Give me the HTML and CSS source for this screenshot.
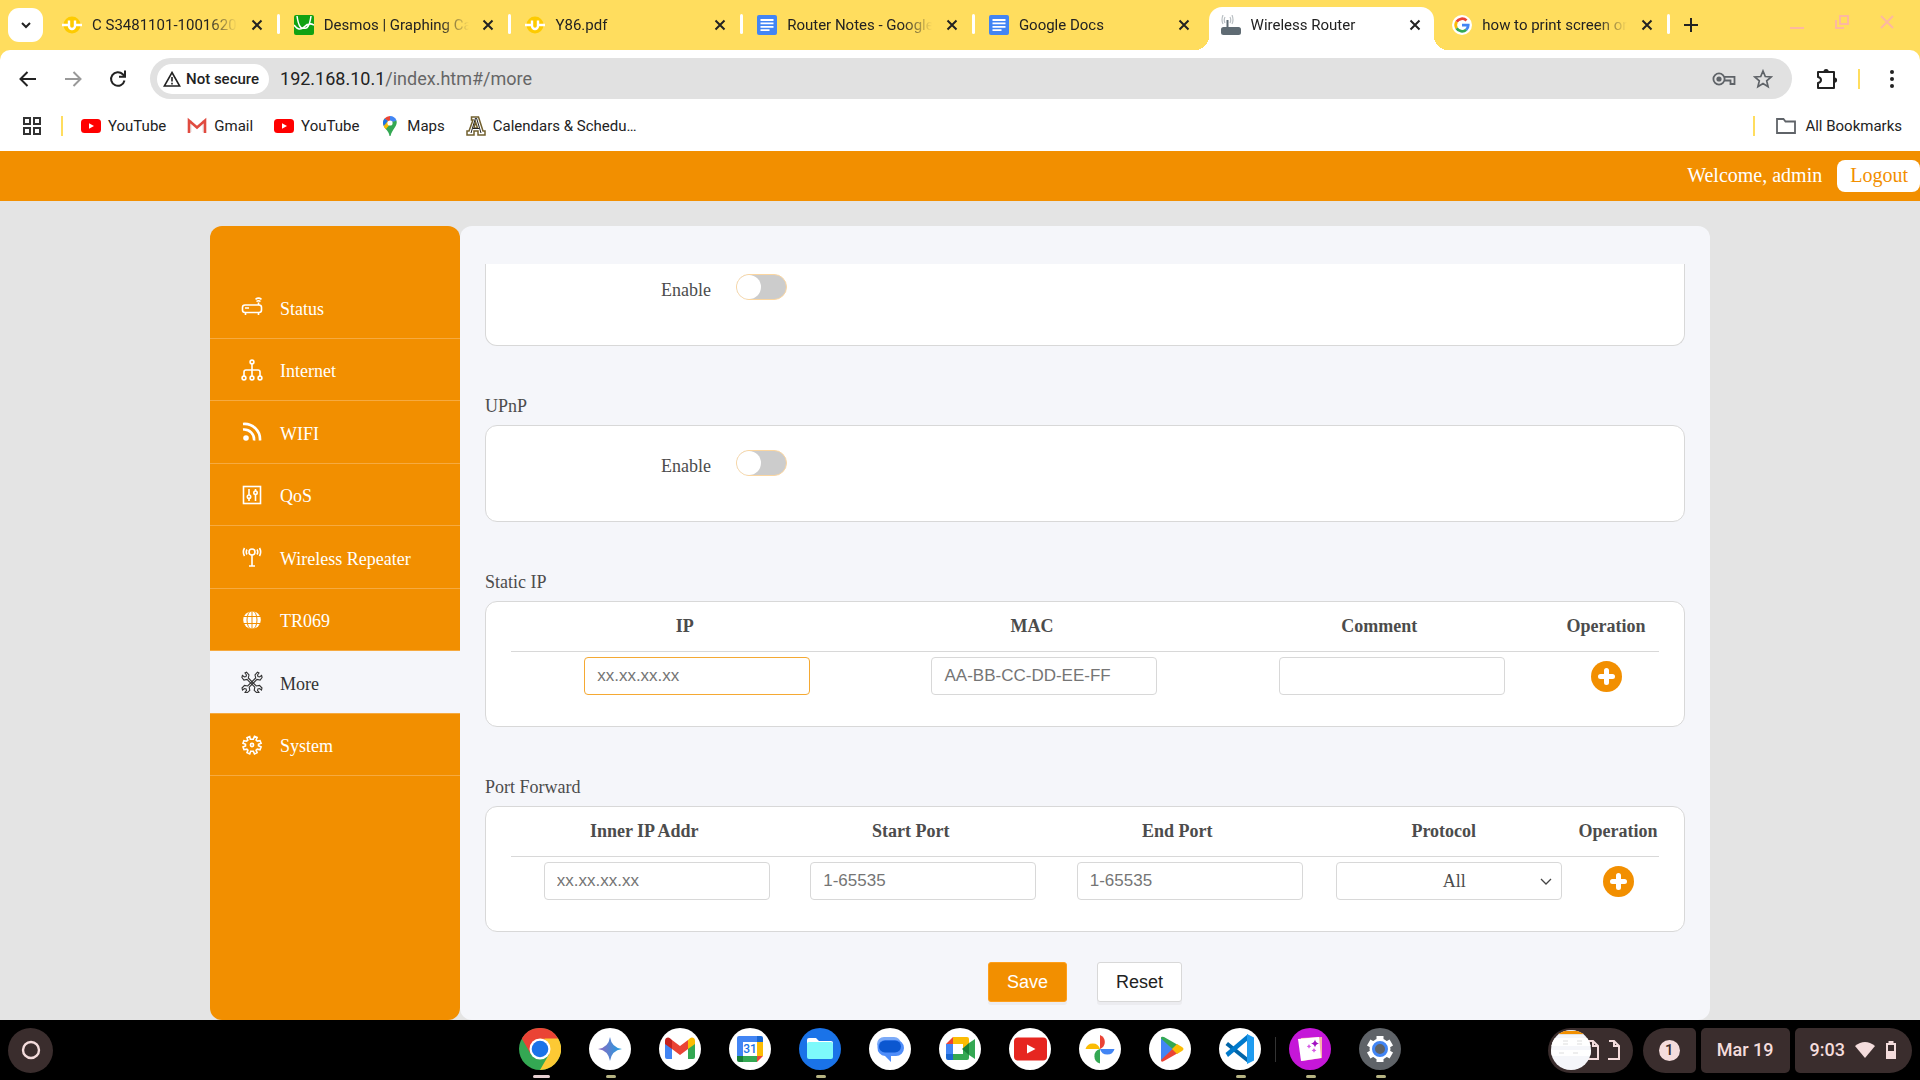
FILE: index.html
```html
<!DOCTYPE html>
<html lang="en">
<head>
<meta charset="utf-8">
<title>Wireless Router</title>
<link rel="stylesheet" href="styles.css">
</head>
<body>
<svg class="defs" aria-hidden="true">
  <symbol id="x" viewBox="0 0 16 16"><path d="M3.500 3.500l9 9M12.500 3.500l-9 9" stroke="currentColor" stroke-width="2" fill="none"/></symbol>
  <symbol id="brand-u" viewBox="0 0 20 20"><circle cx="10" cy="10" r="8.500" fill="#fecb00"/><path d="M0 10h6M14 10h6M7 5.500V11a3 3 0 0 0 6 0V5.500" stroke="#fff" stroke-width="2.400" fill="none"/></symbol>
  <symbol id="docs" viewBox="0 0 20 20"><rect width="20" height="20" rx="2" fill="#4285f4"/><path d="M3.500 5h13M3.500 8.400h13M3.500 11.800h13M3.500 15.200h9" stroke="#fff" stroke-width="1.800"/></symbol>
  <symbol id="youtube" viewBox="0 0 20 20"><rect y="3" width="20" height="14" rx="3.500" fill="#f00"/><path d="M8 7.200v5.600l5-2.800z" fill="#fff"/></symbol>
  <symbol id="plus" viewBox="0 0 31 31"><circle cx="15.500" cy="15.500" r="15.500" fill="#f28f00"/><path d="M15.500 9.500v12M9.500 15.500h12" stroke="#fff" stroke-width="5" stroke-linecap="round"/></symbol>
</svg>

<header class="browser">
  <div class="tabstrip">
    <button class="tab-search" aria-label="Search tabs"><svg width="14" height="14" viewBox="0 0 14 14"><path d="M3 5l4 4 4-4" stroke="#222" stroke-width="2" fill="none"/></svg></button>
    <nav class="tabs" aria-label="Tabs">
      <div class="tab"><svg class="fav"><use href="#brand-u"/></svg><span class="tab-title">C S3481101-1001620 Computer</span><button class="close" aria-label="Close"><svg><use href="#x"/></svg></button></div>
      <div class="tab"><svg class="fav" viewBox="0 0 20 20"><rect width="20" height="20" rx="2" fill="#11a113"/><path d="M0 10q5 7 10 2t10-2M3 1q2 14 7 12 5 2 7-12" stroke="#fff" stroke-width="1.500" fill="none"/></svg><span class="tab-title">Desmos | Graphing Calculator</span><button class="close" aria-label="Close"><svg><use href="#x"/></svg></button></div>
      <div class="tab"><svg class="fav"><use href="#brand-u"/></svg><span class="tab-title">Y86.pdf</span><button class="close" aria-label="Close"><svg><use href="#x"/></svg></button></div>
      <div class="tab"><svg class="fav"><use href="#docs"/></svg><span class="tab-title">Router Notes - Google Docs</span><button class="close" aria-label="Close"><svg><use href="#x"/></svg></button></div>
      <div class="tab tab-bare"><svg class="fav"><use href="#docs"/></svg><span class="tab-title">Google Docs</span><button class="close" aria-label="Close"><svg><use href="#x"/></svg></button></div>
      <div class="tab tab-active"><svg class="fav" viewBox="0 0 20 20"><rect y="12" width="20" height="8" rx="2.500" fill="#5f6b73"/><path d="M6.500 13V5" stroke="#5f6b73" stroke-width="2"/><path d="M4 2q-1.500 3 0 6M9 2q1.500 3 0 6M2 0q-2 5 0 9M11 0q2 5 0 9" stroke="#b9bfc3" stroke-width="1.200" fill="none"/></svg><span class="tab-title">Wireless Router</span><button class="close" aria-label="Close"><svg><use href="#x"/></svg></button></div>
      <div class="tab"><svg class="fav" viewBox="0 0 20 20"><circle cx="10" cy="10" r="10" fill="#fff"/><g fill="none" stroke-width="2.800"><path d="M14.500 5.600A6.300 6.300 0 0 0 4.600 6.800" stroke="#ea4335"/><path d="M4.600 6.800a6.300 6.300 0 0 0 0 6.400" stroke="#fbbc04"/><path d="M4.600 13.200a6.300 6.300 0 0 0 9.600 1.500" stroke="#34a853"/><path d="M14.200 14.700A6 6 0 0 0 16.200 10.200H10" stroke="#4285f4"/></g></svg><span class="tab-title">how to print screen on chromebook</span><button class="close" aria-label="Close"><svg><use href="#x"/></svg></button></div>
    </nav>
    <div class="window-tools">
      <button class="new-tab" aria-label="New tab"><svg width="14" height="14" viewBox="0 0 14 14"><path d="M7 0v14M0 7h14" stroke="#222" stroke-width="2"/></svg></button>
      <button class="win" aria-label="Minimize"><svg width="16" height="16" viewBox="0 0 16 16"><path d="M1 14h14" stroke="#fdb8a0" stroke-width="2"/></svg></button>
      <button class="win" aria-label="Restore"><svg width="16" height="16" viewBox="0 0 16 16"><path d="M6 2h8v8H6zM2 6v8h8" stroke="#fdb8a0" stroke-width="2" fill="none"/></svg></button>
      <button class="win" aria-label="Close window"><svg width="16" height="16" viewBox="0 0 16 16"><path d="M2 2l12 12M14 2L2 14" stroke="#fdb8a0" stroke-width="2"/></svg></button>
    </div>
  </div>

  <div class="chrome">
    <div class="toolbar">
      <button class="nav-btn" aria-label="Back"><svg width="18" height="16" viewBox="0 0 18 16"><path d="M17 8H2M8.500 1L1.500 8l7 7" stroke="#222" stroke-width="2" fill="none"/></svg></button>
      <button class="nav-btn" aria-label="Forward"><svg width="18" height="16" viewBox="0 0 18 16"><path d="M1 8h15M9.500 1l7 7-7 7" stroke="#999" stroke-width="2" fill="none"/></svg></button>
      <button class="nav-btn" aria-label="Reload"><svg width="18" height="18" viewBox="0 0 18 18"><path d="M15.500 10.500A6.800 6.800 0 1 1 13.800 4.300L16 6.500M16 .500v6.300H10" stroke="#222" stroke-width="2" fill="none"/></svg></button>
      <div class="omnibox">
        <button class="chip"><svg width="18" height="16" viewBox="0 0 18 16"><path d="M9 1.500L16.700 15H1.300zM9 6v4.500M9 11.800v1.700" stroke="#222" stroke-width="1.600" fill="none"/></svg>Not secure</button>
        <span class="url">192.168.10.1<span class="path">/index.htm#/more</span></span>
        <svg width="24" height="16" viewBox="0 0 24 16"><circle cx="7" cy="8" r="5.600" stroke="#5f6368" stroke-width="1.800" fill="none"/><circle cx="7" cy="8" r="2.600" fill="#5f6368"/><path d="M12 5.800h10.500V13h-4V9.500h-6" stroke="#5f6368" stroke-width="1.800" fill="none"/></svg>
        <svg width="20" height="20" viewBox="0 0 20 20"><path d="M10 2l2.300 5.500 5.900.500-4.500 3.900 1.400 5.800L10 14.600l-5.100 3.100 1.400-5.800L1.800 8l5.900-.500z" stroke="#5f6368" stroke-width="1.700" fill="none"/></svg>
      </div>
      <div class="tool-right">
        <svg width="22" height="22" viewBox="0 0 22 22"><path d="M2 4h16v16H2v-5q3-.700 3-3t-3-3z" stroke="#222" stroke-width="2" fill="none" stroke-linejoin="round"/><path d="M7.500 3.500a2.600 2.600 0 0 1 5.200 0zM18.500 9.500a2.600 2.600 0 0 1 0 5.200z" fill="#222"/></svg>
        <span class="bar"></span>
        <svg width="6" height="20" viewBox="0 0 6 20"><g fill="#222"><circle cx="3" cy="3" r="2"/><circle cx="3" cy="10" r="2"/><circle cx="3" cy="17" r="2"/></g></svg>
      </div>
    </div>
    <nav class="bookmarks" aria-label="Bookmarks">
      <svg width="18" height="18" viewBox="0 0 18 18"><path d="M1 1h6v6H1zM11 1h6v6h-6zM1 11h6v6H1zM11 11h6v6h-6z" stroke="#333" stroke-width="2" fill="none"/></svg>
      <span class="bar bar-start"></span>
      <a href="#"><svg class="fav"><use href="#youtube"/></svg>YouTube</a>
      <a href="#"><svg class="fav" viewBox="0 0 20 20"><path d="M1 4h4v12H1zM15 4h4v12h-4z" fill="#f0f0f0"/><path d="M2 17V4.500l8 7 8-7V17" stroke="#e04b40" stroke-width="2.600" fill="none"/></svg>Gmail</a>
      <a href="#"><svg class="fav"><use href="#youtube"/></svg>YouTube</a>
      <a href="#"><svg class="fav" viewBox="0 0 20 20"><path d="M10 0a7 7 0 0 0-5.400 2.600L10 7z" fill="#ea4335"/><path d="M4.600 2.600A7 7 0 0 0 3.700 10L10 7z" fill="#fbbc04"/><path d="M10 0a7 7 0 0 1 6.500 4.500L10 9z" fill="#4285f4"/><path d="M16.500 4.500C18 10 12 13 10.500 20h-1C9 15 5 13 3.700 10L10 7z" fill="#34a853"/><path d="M4.600 2.600A7 7 0 0 0 3.700 10L8 5z" fill="#1a73e8"/><path d="M3.700 10q.8 2 2 3.300L13 5z" fill="#fbbc04"/><circle cx="10" cy="7" r="2.600" fill="#fff"/></svg>Maps</a>
      <a href="#"><svg class="fav" viewBox="0 0 20 20"><path d="M5.500 1h7l4.500 14h2v4h-7v-4H8v4H1v-4h2L7 4H5.500zM9.500 6l-1.500 6h3.500z" fill="#fff" stroke="#72602e" stroke-width="1.500"/><path d="M9.500 2L5 17M10.500 2L15 17M7 12.500h6" stroke="#222" stroke-width="1" fill="none"/></svg>Calendars &amp; Schedu…</a>
      <span class="bar bar-end"></span>
      <a href="#" class="all"><svg class="fav" viewBox="0 0 20 20"><path d="M1 3h6.500l2 2.500H19V17H1z" stroke="#5f6368" stroke-width="1.800" fill="none"/></svg>All Bookmarks</a>
    </nav>
  </div>
</header>

<div class="topbar">
  <span>Welcome, admin</span>
  <button class="logout">Logout</button>
</div>

<div class="router">
  <nav class="sidebar" aria-label="Router menu">
    <a href="#"><svg width="22" height="22" viewBox="0 0 22 22"><rect x="1.500" y="9" width="19" height="7.500" rx="2.500"/><path d="M4.500 17v2M17.500 17v2M4 12h4M17.500 9V6.500M15.500 5.500q2-1.600 4 0M14.500 3.300q3-2.400 6 0"/></svg>Status</a>
    <a href="#"><svg width="22" height="22" viewBox="0 0 22 22"><circle cx="11" cy="3" r="1.900"/><circle cx="3" cy="19" r="1.900"/><circle cx="11" cy="19" r="1.900"/><circle cx="19" cy="19" r="1.900"/><path d="M11 5v12M3 17v-4q0-2 2-2h12q2 0 2 2v4"/></svg>Internet</a>
    <a href="#"><svg width="22" height="22" viewBox="0 0 22 22"><circle cx="5" cy="17" r="2.800" fill="currentColor" stroke="none"/><path d="M2 8.500A10 10 0 0 1 13 19.500M2 3A15.500 15.500 0 0 1 19 19.500" stroke-width="2.600"/></svg>WIFI</a>
    <a href="#"><svg width="22" height="22" viewBox="0 0 22 22"><rect x="2.500" y="2.500" width="17" height="17"/><path d="M8 5v6M8 14.500V17M14.500 5v2M14.500 10.500V17"/><circle cx="8" cy="12.700" r="1.700"/><circle cx="14.500" cy="8.700" r="1.700"/></svg>QoS</a>
    <a href="#"><svg width="22" height="22" viewBox="0 0 22 22"><circle cx="11" cy="6" r="3"/><path d="M11 9v11M8 20h6M6 3.500q-1.500 2.500 0 5M16 3.500q1.500 2.500 0 5M3.500 2q-2.300 4 0 8M18.500 2q2.300 4 0 8"/></svg>Wireless Repeater</a>
    <a href="#"><svg width="22" height="22" viewBox="0 0 22 22"><circle cx="11" cy="11" r="8.800" fill="currentColor" stroke="none"/><g stroke="#f28f00" stroke-width="1"><path d="M2 7.500h18M2 14.500h18M11 2v18"/><ellipse cx="11" cy="11" rx="5" ry="9.500"/></g></svg>TR069</a>
    <a href="#" class="current" aria-current="page"><svg width="22" height="22" viewBox="0 0 22 22"><g id="wrench" stroke-width="1.100"><path d="M5.500 1.200L8 3.800l-.7 3.200 8 8 3.200-.6 2.500 2.600-.5 2-2-1.500-1.600.4-.4 1.600 1.500 1.900-2 .5-2.800-2.500.6-3.200-7.800-7.800-3.100.7L.9 6.500l.5-2L3.500 6 5 5.500 5.500 4 4 2z"/></g><use href="#wrench" transform="matrix(-1 0 0 1 22 0)"/></svg>More</a>
    <a href="#"><svg width="22" height="22" viewBox="0 0 22 22"><path d="M9.300 5.200L8.700 2.500 6 3.600l.8 2.600-1.200 1-2.700-.6L2 9.300l2.500 1v1.600L2 13l1 2.700 2.800-.5 1.100 1.100L6 18.700l2.700 1.200 1-2.600h2.600l1.200 2.600 2.600-1.200-1-2.500 1.200-1.100 2.700.6 1.100-2.700-2.600-1.200v-1.500l2.600-1-1.100-2.700-2.700.5-1.200-1.100 1-2.500-2.600-1.100-1.200 2.700z"/><circle cx="11" cy="11" r="1.600"/></svg>System</a>
  </nav>

  <main class="panel">
    <div class="card card-cut">
      <label class="field"><span>Enable</span><input type="checkbox" class="switch"></label>
    </div>

    <h2>UPnP</h2>
    <div class="card">
      <label class="field"><span>Enable</span><input type="checkbox" class="switch"></label>
    </div>

    <h2>Static IP</h2>
    <div class="card card-table">
      <table>
        <colgroup><col><col><col><col class="op-wide"></colgroup>
        <thead><tr><th>IP</th><th>MAC</th><th>Comment</th><th>Operation</th></tr></thead>
        <tbody><tr>
          <td><input type="text" class="box focused" aria-label="IP" placeholder="xx.xx.xx.xx"></td>
          <td><input type="text" class="box" aria-label="MAC" placeholder="AA-BB-CC-DD-EE-FF"></td>
          <td><input type="text" class="box" aria-label="Comment"></td>
          <td><button class="add" aria-label="Add static IP"><svg width="31" height="31"><use href="#plus"/></svg></button></td>
        </tr></tbody>
      </table>
    </div>

    <h2>Port Forward</h2>
    <div class="card card-table">
      <table>
        <colgroup><col><col><col><col><col class="op"></colgroup>
        <thead><tr><th>Inner IP Addr</th><th>Start Port</th><th>End Port</th><th>Protocol</th><th>Operation</th></tr></thead>
        <tbody><tr>
          <td><input type="text" class="box" aria-label="Inner IP Addr" placeholder="xx.xx.xx.xx"></td>
          <td><input type="text" class="box" aria-label="Start Port" placeholder="1-65535"></td>
          <td><input type="text" class="box" aria-label="End Port" placeholder="1-65535"></td>
          <td class="cell-select"><span class="select"><select class="box" aria-label="Protocol"><option>All</option><option>TCP</option><option>UDP</option></select><svg width="12" height="8" viewBox="0 0 12 8"><path d="M1 1l5 5 5-5" stroke="#444" stroke-width="1.300" fill="none"/></svg></span></td>
          <td><button class="add" aria-label="Add port forward"><svg width="31" height="31"><use href="#plus"/></svg></button></td>
        </tr></tbody>
      </table>
    </div>

    <div class="actions">
      <button class="btn btn-main">Save</button>
      <button class="btn">Reset</button>
    </div>
  </main>
</div>

<footer class="shelf">
  <button class="launcher" aria-label="Launcher"><svg width="20" height="20" viewBox="0 0 20 20"><circle cx="10" cy="10" r="8" stroke="#f4dcdc" stroke-width="2.400" fill="none"/></svg></button>
  <div class="apps">
    <button class="app open-wide" aria-label="Chrome"><svg viewBox="0 0 42 42"><circle cx="21" cy="21" r="21" fill="#34a853"/><path d="M21 21L2.800 10.500A21 21 0 0 1 39.200 10.500z" fill="#ea4335"/><path d="M21 10.500h18.200A21 21 0 0 1 21 42l9.100-15.800z" fill="#fcc934"/><path d="M2.800 10.500L11.900 26.200 21 21l5-10.500z" fill="#ea4335"/><circle cx="21" cy="21" r="10.500" fill="#fff"/><circle cx="21" cy="21" r="8.300" fill="#1a73e8"/></svg></button>
    <button class="app open" aria-label="Gemini"><svg viewBox="0 0 42 42"><defs><linearGradient id="gem"><stop offset="0" stop-color="#9168c0"/><stop offset=".5" stop-color="#5684d1"/><stop offset="1" stop-color="#1ba1e3"/></linearGradient></defs><circle cx="21" cy="21" r="21" fill="#fff"/><path d="M21 9q1.500 10.500 12 12-10.500 1.500-12 12-1.500-10.500-12-12 10.500-1.500 12-12z" fill="url(#gem)"/></svg></button>
    <button class="app" aria-label="Gmail"><svg viewBox="0 0 42 42"><circle cx="21" cy="21" r="21" fill="#fff"/><path d="M6 15l7 5v11H8a2 2 0 0 1-2-2z" fill="#4285f4"/><path d="M36 15l-7 5v11h5a2 2 0 0 0 2-2z" fill="#34a853"/><path d="M29 12l2-1.700c2-1.600 5-.3 5 2.500V16l-7 5z" fill="#fbbc04"/><path d="M13 12l8 6 8-6v9l-8 6-8-6z" fill="#ea4335"/><path d="M13 12l-2-1.700c-2-1.600-5-.3-5 2.500V16l7 5z" fill="#c5221f"/></svg></button>
    <button class="app" aria-label="Calendar"><svg viewBox="0 0 42 42"><circle cx="21" cy="21" r="21" fill="#fff"/><path d="M8 10q0-2 2-2h18v6H14v14H8z" fill="#4285f4"/><path d="M28 8h4q2 0 2 2v4h-6z" fill="#1967d2"/><path d="M28 14h6v14h-6z" fill="#fbbc04"/><path d="M14 28h14v6H14z" fill="#34a853"/><path d="M8 28h6v6h-4q-2 0-2-2z" fill="#188038"/><path d="M28 28h6l-6 6z" fill="#ea4335"/><text x="21" y="25" class="cal">31</text></svg></button>
    <button class="app open" aria-label="Files"><svg viewBox="0 0 42 42"><circle cx="21" cy="21" r="21" fill="#1a73e8"/><path d="M8 12q0-2 2-2h7l3 3h12q2 0 2 2v4H8z" fill="#fff"/><rect x="8" y="14" width="26" height="17" rx="2" fill="#7df9fb"/></svg></button>
    <button class="app" aria-label="Messages"><svg viewBox="0 0 42 42"><circle cx="21" cy="21" r="21" fill="#fff"/><rect x="8" y="9" width="24" height="14" rx="7" fill="#7baaf7"/><path d="M17 12h10a8 8 0 0 1 0 16h-5v6l-6-6a8 8 0 0 1 1-16z" fill="#4f8df9"/><rect x="10" y="12.500" width="22" height="12" rx="6" fill="#0b57d0"/></svg></button>
    <button class="app" aria-label="Meet"><svg viewBox="0 0 42 42"><circle cx="21" cy="21" r="21" fill="#fff"/><path d="M14 9h14q2 0 2 2v8l-6 3v-6H14z" fill="#fbbc04"/><path d="M7 16l7-7v7z" fill="#ea4335"/><path d="M7 16h7v11H7z" fill="#4285f4"/><path d="M7 26h7v6H9q-2 0-2-2z" fill="#1967d2"/><path d="M14 26h10v-5h6v9q0 2-2 2H14z" fill="#34a853"/><path d="M23 21l7-6v12z" fill="#188038"/><path d="M30 15l6-4v20l-6-4z" fill="#34a853"/></svg></button>
    <button class="app" aria-label="YouTube"><svg viewBox="0 0 42 42"><circle cx="21" cy="21" r="21" fill="#fff"/><rect x="5" y="9.500" width="33" height="23" rx="4" fill="#e62620"/><path d="M18 16.500v9l8.500-4.500z" fill="#fff"/></svg></button>
    <button class="app" aria-label="Photos"><svg viewBox="0 0 42 42"><circle cx="21" cy="21" r="21" fill="#fff"/><path d="M21 7a7.500 7.500 0 0 1 0 14z" fill="#ea4335"/><path d="M21 21h14.500a7.500 7.500 0 0 1-14.500 0z" fill="#4285f4"/><path d="M21 21v14.500a7.500 7.500 0 0 1 0-14.500z" fill="#34a853"/><path d="M21 21H6.500a7.500 7.500 0 0 1 14.500 0z" fill="#fbbc04"/></svg></button>
    <button class="app" aria-label="Play Store"><svg viewBox="0 0 42 42"><circle cx="21" cy="21" r="21" fill="#fff"/><path d="M12 9v24l12-12z" fill="#4285f4"/><path d="M12 10q0-2 3-1l14 8-5 4.500-12-11z" fill="#34a853"/><path d="M12 32q0 3 3 1l14-8-5-4.500z" fill="#ea4335"/><path d="M28 16l5 3q3 2 0 4l-5 3-5-5z" fill="#fbbc04"/></svg></button>
    <button class="app open" aria-label="VS Code"><svg viewBox="0 0 42 42"><circle cx="21" cy="21" r="21" fill="#fff"/><path d="M9 14l20 16v5L6.500 17z" fill="#0065a9"/><path d="M9 29L29 12V6L6.500 25z" fill="#007acc"/><path d="M28 6l7 3.500v23L28 36z" fill="#1f9cf0"/></svg></button>
    <button class="app open after-rule" aria-label="Gallery"><svg viewBox="0 0 42 42"><circle cx="21" cy="21" r="21" fill="#c517d8"/><path d="M12 10l21-1v21l-20 3z" fill="#f6b3a8"/><path d="M9 11l21-2 2 21-20 3z" fill="#fff"/><path d="M26 11.500q.7 3.300 4 4-3.300.7-4 4-.7-3.300-4-4 3.300-.7 4-4z" fill="#a112c2"/><path d="M20 16q.4 2 2.200 2.400-1.800.4-2.200 2.400-.4-2-2.200-2.400 1.800-.4 2.200-2.400zM25 20q.4 2 2.400 2.400-2 .4-2.400 2.400-.4-2-2.400-2.400 2-.4 2.400-2.400z" fill="#d558e4"/></svg></button>
    <button class="app open" aria-label="Settings"><svg viewBox="0 0 42 42"><circle cx="21" cy="21" r="21" fill="#5f6368"/><g stroke="#fff" stroke-width="7"><path d="M21 8v26M9.700 14.500l22.600 13M9.700 27.500l22.600-13"/></g><circle cx="21" cy="21" r="10.500" fill="#fff"/><circle cx="21" cy="21" r="6.500" fill="#5f6368" stroke="#4285f4" stroke-width="3"/></svg></button>
  </div>
  <div class="tray">
    <button class="tote" aria-label="Recent files"><svg width="40" height="40" viewBox="0 0 40 40"><defs><clipPath id="round"><circle cx="20" cy="20" r="20"/></clipPath></defs><g clip-path="url(#round)"><path fill="#f5f6fa" d="M0 0h40v40H0z"/><path fill="#e4e4e4" d="M0 0h40v1H0zM0 4h40v1H0z"/><path fill="#f28f00" d="M0 1h40v3H0z"/><path fill="#fff" d="M0 8h40v8H0zM0 20h40v6H0z"/><path stroke="#ddd" stroke-dasharray="5 9" d="M12 11h24M12 14h24M8 23h24"/></g></svg><svg class="doc" width="18" height="22" viewBox="0 0 18 22"><path d="M4 2h6l5 5v13H4M10 2v5h5" stroke="#f4dcdc" stroke-width="2" fill="none"/></svg><svg class="doc" width="18" height="22" viewBox="0 0 18 22"><path d="M5 2h5l5 5v13H4M10 2v5h5" stroke="#f4dcdc" stroke-width="2" fill="none"/></svg></button>
    <button class="pill pill-left" aria-label="Notifications"><span class="count">1</span></button>
    <button class="pill">Mar 19</button>
    <button class="pill pill-right">9:03<svg width="20" height="16" viewBox="0 0 20 16"><path d="M0 4q10-8 20 0L10 16z" fill="#f4dcdc"/></svg><svg width="12" height="18" viewBox="0 0 12 18"><path d="M3.500 0h5v2H11v16H1V2h2.500zM3 4v6h6V4z" fill="#f4dcdc" fill-rule="evenodd"/></svg></button>
  </div>
</footer>
</body>
</html>
```
FILE: styles.css
```css
* { box-sizing: border-box; }

:root {
  --orange: #f28f00;
  --ink: #4c4c4c;
  --panel: #f5f6fa;
  --line: #d8d8d8;
  --tray: #3a2d2d;
  --tray-ink: #f4dcdc;
}

body {
  margin: 0;
  min-height: 100vh;
  display: flex;
  flex-direction: column;
  background: #e4e4e4;
  color: var(--ink);
  font: 18px/22px "Liberation Serif", serif;
}

button {
  padding: 0;
  border: 0;
  background: none;
  color: inherit;
  font: inherit;
}

a { color: inherit; text-decoration: none; }
svg { display: block; flex: none; }
.defs { position: absolute; width: 0; height: 0; }
.fav { width: 20px; height: 20px; }

/* Browser frame */
.browser {
  background: #ffdd5e;
  color: #222;
  font: 15px/20px Roboto, sans-serif;
}

.tabstrip { display: flex; height: 50px; }

.tab-search {
  display: grid;
  place-items: center;
  width: 35px;
  height: 34px;
  margin: 8px 4px 0 8px;
  border-radius: 11px;
  background: #fff;
}

.tabs { display: flex; flex: 1; min-width: 0; }

.tab {
  position: relative;
  z-index: 0;
  display: flex;
  flex: 1;
  align-items: center;
  gap: 10px;
  min-width: 0;
  padding: 0 14px 0 15px;
}

.tab::after {
  content: "";
  position: absolute;
  top: 14px;
  right: -1px;
  width: 3px;
  height: 20px;
  border-radius: 2px;
  background: #fff;
}

.tab-bare::after { display: none; }

.tab-title {
  flex: 1;
  overflow: hidden;
  white-space: nowrap;
  mask-image: linear-gradient(to right, #000 115px, transparent 145px);
}

.close svg { width: 16px; height: 16px; }

.tab-active::before {
  content: "";
  position: absolute;
  z-index: -1;
  inset: 7px 3px 0;
  border-radius: 13px 13px 0 0;
  background: #fff;
}

.tab-active::after {
  z-index: -1;
  top: auto;
  bottom: 0;
  left: -11px;
  right: -11px;
  width: auto;
  height: 14px;
  border-radius: 0;
  background:
    radial-gradient(circle at 0 0, transparent 14px, #fff 14px) left / 14px 14px no-repeat,
    radial-gradient(circle at 100% 0, transparent 14px, #fff 14px) right / 14px 14px no-repeat;
}

.window-tools {
  display: flex;
  align-items: center;
  width: 251px;
  padding: 0 25px 0 15px;
}

.new-tab { margin-right: auto; }
.win { margin: 0 0 6px 29px; }

.chrome {
  border-radius: 10px 10px 0 0;
  background: #fff;
}

.toolbar {
  display: flex;
  align-items: center;
  padding: 8px 0 0 5px;
}

.nav-btn {
  display: grid;
  place-items: center;
  width: 45px;
  height: 40px;
}

.omnibox {
  display: flex;
  flex: 1;
  align-items: center;
  gap: 17px;
  height: 41px;
  margin-left: 10px;
  padding: 0 19px 0 7px;
  border-radius: 21px;
  background: #e1e1e1;
}

.chip {
  display: flex;
  align-items: center;
  gap: 5px;
  height: 30px;
  margin-right: -6px;
  padding: 0 10px 0 6px;
  border-radius: 15px;
  background: #fff;
  font-weight: 500;
}

.url { flex: 1; font-size: 18px; }
.path { color: #666; }

.tool-right {
  display: flex;
  align-items: center;
  justify-content: space-between;
  gap: 20px;
  width: 128px;
  padding: 0 25px 0 24px;
}

.bar {
  width: 2px;
  height: 20px;
  background: #ffdd5e;
}

.tool-right .bar { margin-right: auto; }

.bookmarks {
  display: flex;
  align-items: center;
  gap: 21px;
  height: 52px;
  padding: 2px 18px 0 23px;
}

.bookmarks a { display: flex; gap: 7px; }
.bookmarks .bar-start { margin: 0 -3px 0 -1px; }
.bookmarks .bar-end { margin-left: auto; }
.bookmarks .all { gap: 9px; }

/* Router page */
.topbar {
  display: flex;
  align-items: center;
  justify-content: flex-end;
  gap: 15px;
  height: 50px;
  background: var(--orange);
  color: #fff;
  font-size: 20px;
}

.logout {
  height: 32px;
  padding: 0 12px 2px 13px;
  border-radius: 8px;
  background: #fff;
  color: var(--orange);
}

.topbar span { padding-bottom: 2px; }

.router {
  display: flex;
  flex: 1;
  width: 100%;
  max-width: 1500px;
  margin: 25px auto 0;
}

.sidebar {
  display: grid;
  grid-template-rows: repeat(8, 1fr);
  align-content: start;
  width: 250px;
  padding: 50px 0 244px;
  border-radius: 12px;
  background: var(--orange);
  color: #fff;
}

.sidebar a {
  display: flex;
  align-items: center;
  gap: 17px;
  padding: 4px 31px 0;
  border-bottom: 1px solid #f6aa40;
}

.sidebar svg {
  margin-bottom: 3px;
  fill: none;
  stroke: currentColor;
  stroke-width: 1.6;
}

.sidebar .current { background: var(--panel); color: #333; }

.panel {
  flex: 1;
  min-width: 0;
  padding: 38px 25px 16px;
  border-radius: 12px;
  background: var(--panel);
}

h2 {
  margin: 49px 0 8px;
  font: inherit;
}

.card {
  padding: 24px 25px 44px;
  border: 1px solid var(--line);
  border-radius: 12px;
  background: #fff;
}

.card-cut {
  padding-top: 10px;
  border-top: 0;
  border-radius: 0 0 12px 12px;
}

.card-table { padding: 0 25px 25px; }

.field { display: flex; gap: 25px; }

.field span {
  width: 200px;
  padding-top: 5px;
  text-align: right;
}

.switch {
  appearance: none;
  flex: none;
  width: 51px;
  height: 26px;
  margin: 0;
  border: 1px solid #fbd6a0;
  border-radius: 13px;
  background: #ccc;
}

.switch::before {
  content: "";
  display: block;
  width: 24px;
  height: 24px;
  border-radius: 50%;
  background: #fff;
}

table {
  width: 100%;
  border-collapse: collapse;
  table-layout: fixed;
}

.op-wide { width: 106px; }
.op { width: 82px; }

th {
  height: 49px;
  padding: 0;
  border-bottom: 1px solid var(--line);
}

td {
  height: 50px;
  padding: 0;
  text-align: center;
}

.box {
  display: block;
  width: 226px;
  max-width: 100%;
  height: 38px;
  margin: 0 auto;
  padding: 0 12px;
  border: 1px solid var(--line);
  border-radius: 4px;
  background: #fff;
  color: var(--ink);
  font: 17px/22px "Liberation Sans", sans-serif;
}

td:not(:last-child) { padding-left: 25px; }
td.cell-select { padding-left: 11px; }
.box::placeholder { color: #757575; }
.focused { border-color: #f5a933; }

.select {
  position: relative;
  display: block;
  width: 226px;
  max-width: 100%;
  margin: 0 auto;
}

.select .box {
  appearance: none;
  width: 100%;
  padding: 0 12px 0 22px;
  font: inherit;
  text-align-last: center;
}

.select svg {
  position: absolute;
  top: 16px;
  right: 10px;
  pointer-events: none;
}

.add { vertical-align: middle; }

.actions {
  display: flex;
  justify-content: center;
  gap: 30px;
  margin-top: 30px;
}

.btn {
  height: 40px;
  padding: 0 18px;
  border: 1px solid var(--line);
  border-radius: 3px;
  background: #fff;
  box-shadow: 0 3px 0 #ececf0;
  color: #222;
  font: 18px/22px "Liberation Sans", sans-serif;
}

.btn-main {
  border-color: #ff9f1a;
  background: var(--orange);
  color: #fff;
}

/* Shelf */
.shelf {
  display: grid;
  grid-template-columns: 1fr auto 1fr;
  align-items: center;
  height: 60px;
  padding: 0 8px;
  background: #000;
  color: var(--tray-ink);
  font: 500 18px/22px Roboto, sans-serif;
}

.launcher {
  display: grid;
  place-items: center;
  width: 45px;
  height: 45px;
  border-radius: 50%;
  background: var(--tray);
}

.apps { display: flex; gap: 28px; }

.app {
  position: relative;
  width: 42px;
  height: 42px;
  margin-bottom: 2px;
}

.cal {
  fill: #1a73e8;
  font-size: 12px;
  text-anchor: middle;
}

.open::after,
.open-wide::after {
  content: "";
  position: absolute;
  bottom: -8px;
  left: 17px;
  width: 10px;
  height: 3px;
  border-radius: 2px;
  background: #b5b382;
}

.open-wide::after {
  left: 14px;
  width: 17px;
  background: #e6cfd0;
}

.after-rule::before {
  content: "";
  position: absolute;
  top: 9px;
  left: -14px;
  width: 1px;
  height: 25px;
  background: #333;
}

.tray {
  display: flex;
  justify-content: flex-end;
  gap: 5px;
}

.tote,
.pill {
  display: flex;
  align-items: center;
  height: 45px;
  background: var(--tray);
}

.tote {
  position: relative;
  z-index: 0;
  overflow: hidden;
  width: 85px;
  margin-right: 5px;
  padding-left: 3px;
  border-radius: 23px;
}

.tote .doc { position: relative; z-index: -1; margin-left: -8px; }
.tote .doc + .doc { margin-left: 3px; }

.pill {
  gap: 10px;
  padding: 0 16px;
  border-radius: 5px;
}

.pill-left { border-radius: 23px 5px 5px 23px; }
.pill-right { padding: 0 15px; border-radius: 5px 23px 23px 5px; }

.count {
  width: 21px;
  border-radius: 50%;
  background: var(--tray-ink);
  color: var(--tray);
  font-size: 15px;
  line-height: 21px;
  text-align: center;
}
```
